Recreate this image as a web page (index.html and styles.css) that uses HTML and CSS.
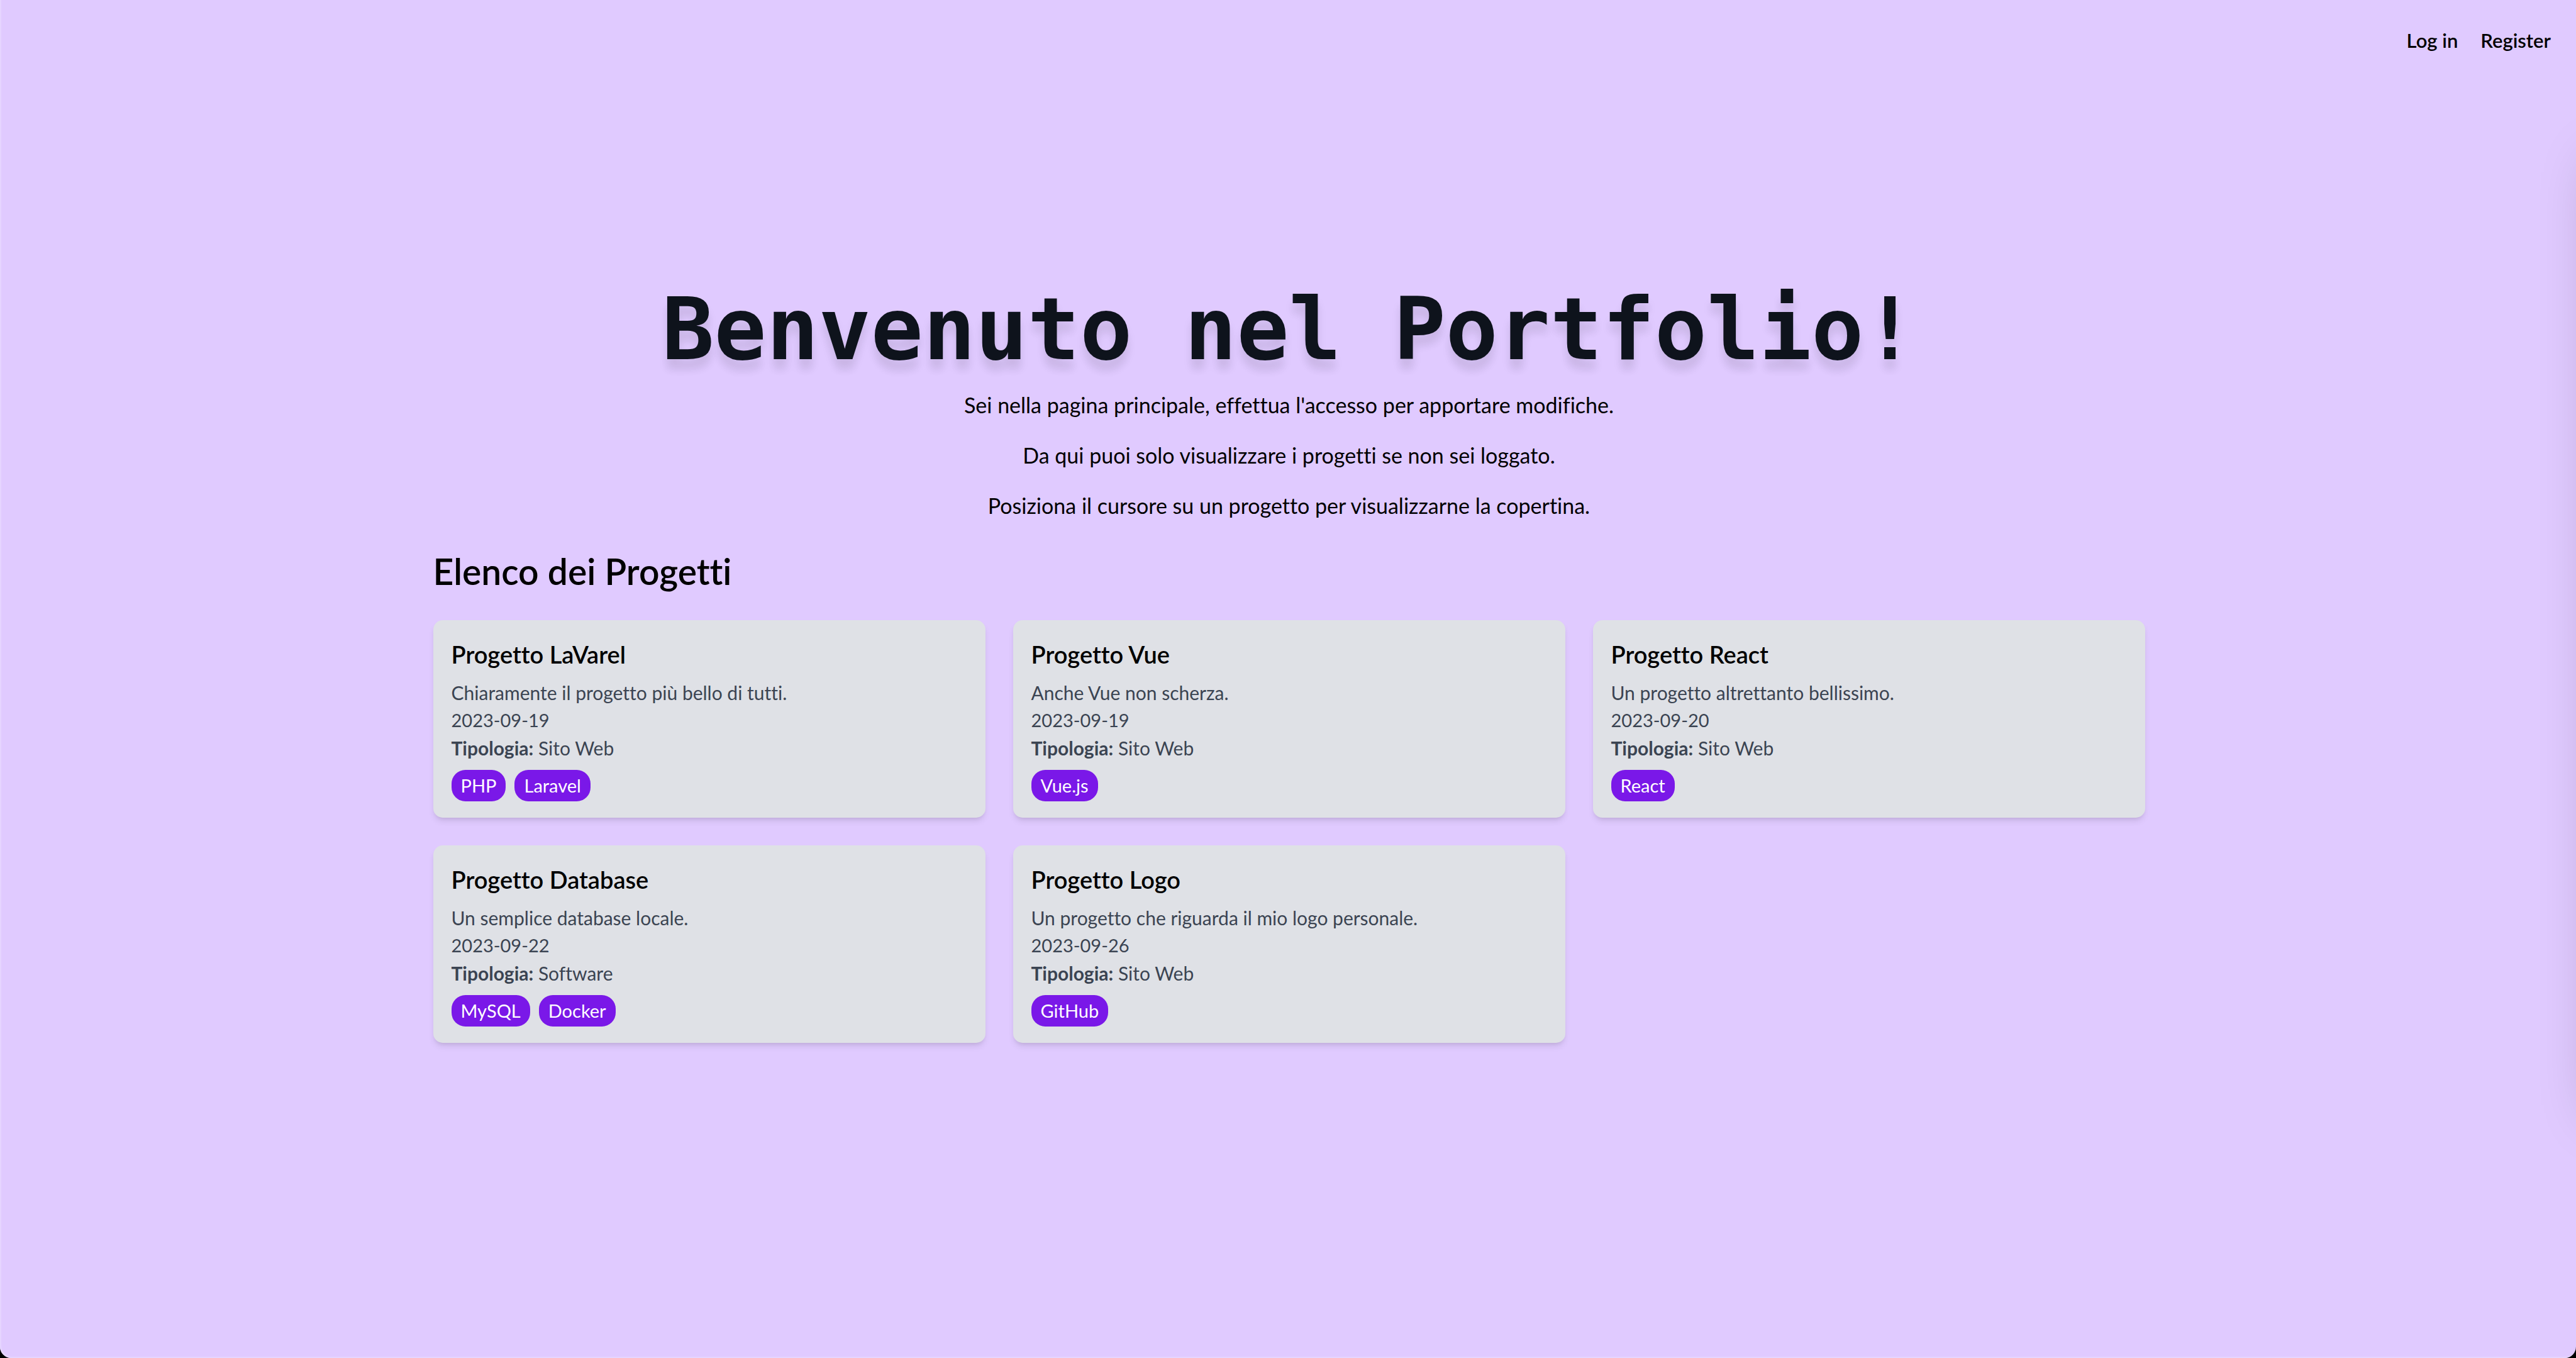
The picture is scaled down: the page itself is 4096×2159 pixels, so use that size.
FILE: index.html
```html
<!DOCTYPE html>
<html lang="it">
<head>
  <meta charset="utf-8">
  <meta name="viewport" content="width=device-width, initial-scale=1">
  <title>Portfolio</title>
  <link rel="stylesheet" href="styles.css">
</head>
<body>
  <div class="page">
    <header class="site-header">
      <nav class="site-nav">
        <a class="nav-link" href="#login">Log in</a>
        <a class="nav-link" href="#register">Register</a>
      </nav>
    </header>

    <main class="content">
      <section class="hero">
        <h1 class="hero-title">Benvenuto nel Portfolio!</h1>
        <p class="hero-text">Sei nella pagina principale, effettua l'accesso per apportare modifiche.</p>
        <p class="hero-text">Da qui puoi solo visualizzare i progetti se non sei loggato.</p>
        <p class="hero-text">Posiziona il cursore su un progetto per visualizzarne la copertina.</p>
      </section>

      <section class="projects">
        <h2 class="projects-title">Elenco dei Progetti</h2>
        <div class="project-grid">
          <article class="card">
            <h3 class="card-title">Progetto LaVarel</h3>
            <p class="card-text">Chiaramente il progetto più bello di tutti.</p>
            <p class="card-text card-date">2023-09-19</p>
            <p class="card-text"><strong class="card-label">Tipologia:</strong> Sito Web</p>
            <ul class="tags">
              <li class="tag">PHP</li>
              <li class="tag">Laravel</li>
            </ul>
          </article>
          <article class="card">
            <h3 class="card-title">Progetto Vue</h3>
            <p class="card-text">Anche Vue non scherza.</p>
            <p class="card-text card-date">2023-09-19</p>
            <p class="card-text"><strong class="card-label">Tipologia:</strong> Sito Web</p>
            <ul class="tags">
              <li class="tag">Vue.js</li>
            </ul>
          </article>
          <article class="card">
            <h3 class="card-title">Progetto React</h3>
            <p class="card-text">Un progetto altrettanto bellissimo.</p>
            <p class="card-text card-date">2023-09-20</p>
            <p class="card-text"><strong class="card-label">Tipologia:</strong> Sito Web</p>
            <ul class="tags">
              <li class="tag">React</li>
            </ul>
          </article>
          <article class="card">
            <h3 class="card-title">Progetto Database</h3>
            <p class="card-text">Un semplice database locale.</p>
            <p class="card-text card-date">2023-09-22</p>
            <p class="card-text"><strong class="card-label">Tipologia:</strong> Software</p>
            <ul class="tags">
              <li class="tag">MySQL</li>
              <li class="tag">Docker</li>
            </ul>
          </article>
          <article class="card">
            <h3 class="card-title">Progetto Logo</h3>
            <p class="card-text">Un progetto che riguarda il mio logo personale.</p>
            <p class="card-text card-date">2023-09-26</p>
            <p class="card-text"><strong class="card-label">Tipologia:</strong> Sito Web</p>
            <ul class="tags">
              <li class="tag">GitHub</li>
            </ul>
          </article>
        </div>
      </section>
    </main>
    <div class="edge-shadow"></div>
  </div>
</body>
</html>
```
FILE: styles.css
```css
*,
*::before,
*::after {
  box-sizing: border-box;
}

body,
h1,
h2,
h3,
p,
ul {
  margin: 0;
}

html {
  background: #000;
}

body {
  font-family: Lato, "Open Sans", sans-serif;
  font-size: 30px;
  line-height: 44px;
  font-variant-ligatures: none;
  color: #000;
}

.page {
  position: relative;
  min-height: 100vh;
  padding-left: 3px;
  overflow: hidden;
  background: #e0caff;
  border-radius: 0 0 18px 18px;
  box-shadow: inset 2px -2px 0 #e6d5ff;
}

/* Navigation */

.site-header {
  padding: 42px 40px 44px;
}

.site-nav {
  display: flex;
  justify-content: flex-end;
  gap: 36px;
}

.nav-link {
  font-size: 31px;
  font-weight: 600;
  color: #000;
  text-decoration: none;
}

/* Hero */

.content {
  max-width: 2810px;
  margin: 0 auto;
  padding: 324px 44px 44px;
}

.hero {
  text-align: center;
}

.hero-title {
  margin-bottom: 25px;
  font-family: "DejaVu Sans Mono", monospace;
  font-size: 138px;
  line-height: 139px;
  font-weight: 700;
  color: #0e131c;
  text-shadow: 0 18px 14px rgba(0, 0, 0, 0.03), 0 15px 15px rgba(0, 0, 0, 0.08);
}

.hero-text {
  margin-bottom: 29px;
  font-size: 34px;
  line-height: 51px;
}

/* Projects */

.projects {
  padding-top: 17px;
}

.projects-title {
  margin-bottom: 45px;
  font-size: 57px;
  line-height: 66px;
  font-weight: 600;
}

.project-grid {
  display: grid;
  grid-template-columns: repeat(3, 1fr);
  gap: 44px;
}

.card {
  padding: 29px 29px 26px;
  background: #dfe1e6;
  border-radius: 15px;
  box-shadow: 0 7px 11px -2px rgba(0, 0, 0, 0.1), 0 4px 7px -4px rgba(0, 0, 0, 0.1);
}

.card-title {
  margin-bottom: 13px;
  font-size: 38px;
  line-height: 51px;
  font-weight: 600;
}

.card-text {
  color: #3b4452;
}

.card-date {
  font-size: 29px;
}

.card-label {
  font-weight: 700;
}

.tags {
  display: flex;
  flex-wrap: wrap;
  gap: 14px;
  margin-top: 13px;
  padding: 0;
  list-style: none;
}

.tag {
  padding: 3px 15px;
  font-size: 29px;
  color: #fff;
  background: #7a18e8;
  border-radius: 22px;
}

/* Soft shade along the right edge */

.edge-shadow {
  position: absolute;
  top: 12%;
  bottom: 18%;
  left: 100%;
  width: 200px;
  margin-left: 36px;
  box-shadow: 0 0 90px rgba(0, 0, 0, 0.25);
  pointer-events: none;
}
```
